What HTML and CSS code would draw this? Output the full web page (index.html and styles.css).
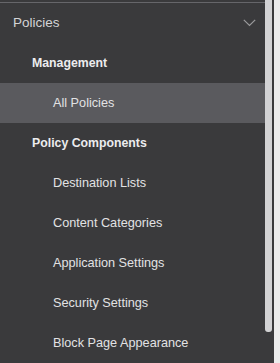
FILE: index.html
```html
<!DOCTYPE html>
<html lang="en">
<head>
    <meta charset="UTF-8">
    <meta name="viewport" content="width=device-width, initial-scale=1.0">
    <title>Policies</title>
    <link rel="stylesheet" href="styles.css">
</head>
<body>
    <div class="panel">
        <nav class="menu">
            <div class="menu-header">
                <span>Policies</span>
                <svg class="chevron" width="13" height="8" viewBox="0 0 13 8">
                    <path d="M0.8 0.8 L6.5 6.5 L12.2 0.8" fill="none" stroke="#9a9a9c" stroke-width="1.2"/>
                </svg>
            </div>
            <div class="group-title">Management</div>
            <a class="item active" href="#">All Policies</a>
            <div class="group-title">Policy Components</div>
            <a class="item" href="#">Destination Lists</a>
            <a class="item" href="#">Content Categories</a>
            <a class="item" href="#">Application Settings</a>
            <a class="item" href="#">Security Settings</a>
            <a class="item" href="#">Block Page Appearance</a>
        </nav>
        <div class="scroll-track">
            <div class="scroll-thumb"></div>
        </div>
    </div>
</body>
</html>
```

FILE: styles.css
```css
* {
    margin: 0;
    padding: 0;
    box-sizing: border-box;
}

body {
    font-family: "Liberation Sans", Arial, sans-serif;
    background: #ececec;
    height: 363px;
    overflow: hidden;
}

.panel {
    display: flex;
    width: 274px;
    height: 363px;
    background: #3a3a3c;
}

.menu {
    width: 265px;
    padding-top: 2px;
}

.menu-header {
    display: flex;
    align-items: center;
    justify-content: space-between;
    height: 41px;
    padding: 0 9px 1px 13px;
    border-top: 1px solid #66666a;
    color: #d4d4d6;
    font-size: 13.5px;
}

.chevron {
    display: block;
}

.group-title,
.item {
    display: flex;
    align-items: center;
    height: 40px;
    padding-bottom: 1px;
}

.group-title {
    padding-left: 32px;
    color: #ececee;
    font-size: 12.3px;
    font-weight: 700;
}

.item {
    padding-left: 53px;
    color: #e2e2e4;
    font-size: 12.7px;
    text-decoration: none;
}

.item.active {
    background: #5a5a5e;
}

.scroll-track {
    width: 9px;
    padding-right: 2px;
}

.scroll-thumb {
    width: 7px;
    height: 332px;
    background: #d2d2d4;
    border-radius: 0 0 3px 3px;
}
```
